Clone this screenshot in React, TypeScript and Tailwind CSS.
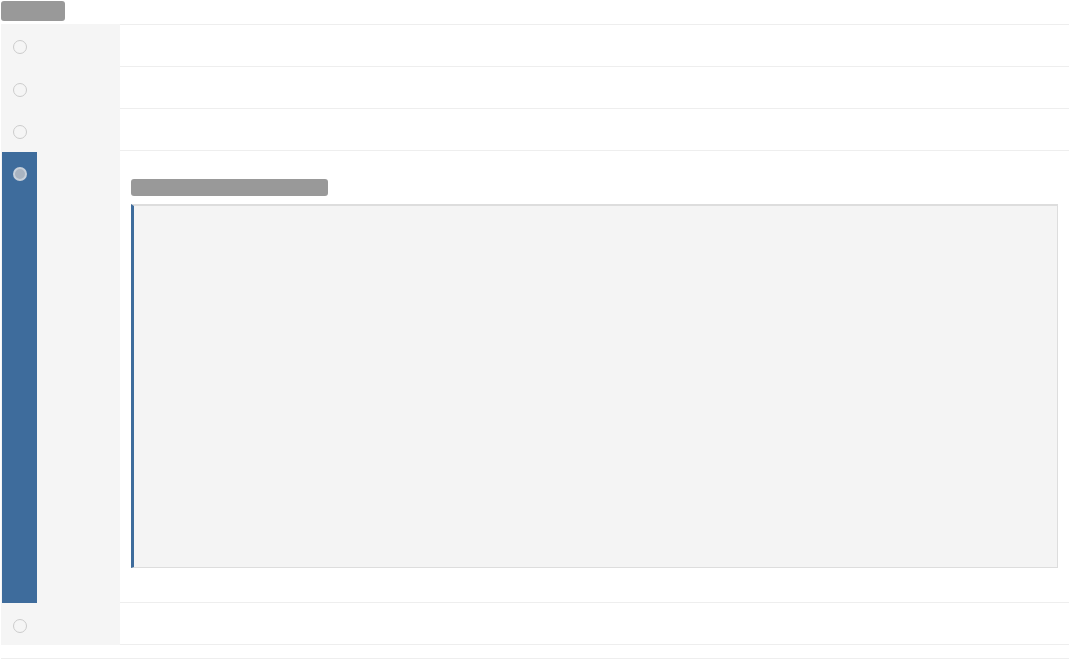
const rows = [
  { id: 1, selected: false },
  { id: 2, selected: false },
  { id: 3, selected: false },
  { id: 4, selected: true },
  { id: 5, selected: false },
];

const Radio = ({ selected }: { selected: boolean }) =>
  selected ? (
    <div className="w-[14px] h-[14px] rounded-full bg-[#a9b4c1] border-2 border-[#c7d0da]" />
  ) : (
    <div className="w-[14px] h-[14px] rounded-full border border-[#cccccc] bg-[#f5f5f5]" />
  );

export default function App() {
  return (
    <div className="w-[1070px] h-[659px] bg-white font-['Liberation_Sans',sans-serif]">
      <div className="h-[24px] pl-[1px] pt-[1px]">
        <div className="w-[64px] h-[20px] rounded-[3px] bg-[#999999]" />
      </div>

      <div className="flex flex-col border-b border-[#eeeeee] pb-[13px] mr-[1px] ml-[1px]">
        {rows.map((row, i) => (
          <div key={row.id} className="flex">
            <div className="w-[119px] bg-[#f5f5f5] flex">
              {row.selected ? (
                <div className="w-[35px] mt-[1px] ml-[1px] bg-[#3e6c9c] flex justify-center pt-[15px]">
                  <Radio selected />
                </div>
              ) : (
                <div className="w-[35px] ml-[1px] flex justify-center pt-[16px] h-[42px]">
                  <Radio selected={false} />
                </div>
              )}
            </div>
            <div
              className={`flex-1 border-b border-[#eeeeee] ${i === 0 ? 'border-t' : ''} ${
                row.selected ? 'h-[452px] px-[11px] pt-[28px]' : i === 0 ? 'h-[43px]' : 'h-[42px]'
              }`}
            >
              {row.selected && (
                <>
                  <div className="w-[197px] h-[17px] rounded-[3px] bg-[#999999]" />
                  <div className="mt-[8px] h-[364px] bg-[#f4f4f4] border border-[#dddddd] border-t-2 border-l-[3px] border-l-[#3e6c9c]" />
                </>
              )}
            </div>
          </div>
        ))}
      </div>
    </div>
  );
}
